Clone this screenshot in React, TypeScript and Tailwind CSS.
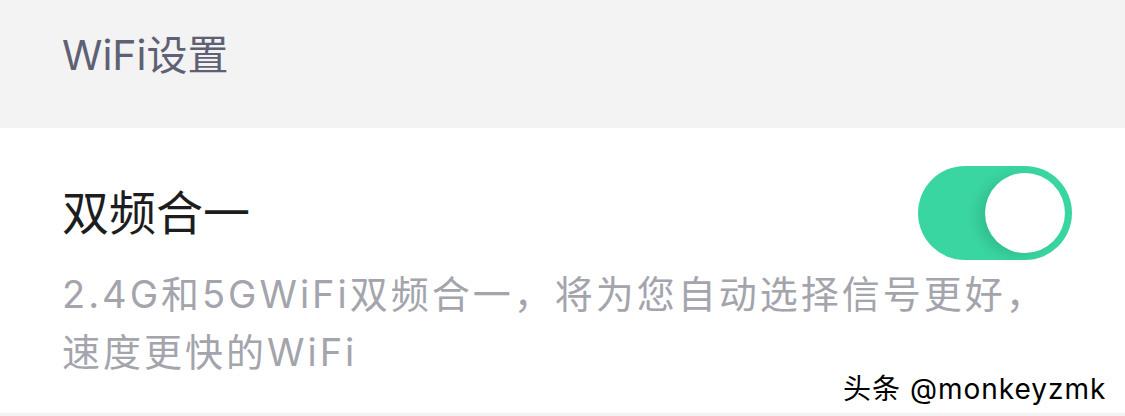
export default function App() {
  const font = { fontFamily: 'Inter, "Noto Sans CJK SC", sans-serif' };
  return (
    <div className="w-[1125px] h-[416px] bg-[#f3f3f4] relative overflow-hidden" style={font}>
      <div className="h-[128px] pl-[62px] pt-[28px]">
        <div className="text-[41px] leading-[54px] text-[#5e6173]">WiFi设置</div>
      </div>
      <div className="bg-white h-[285px] pl-[62px] pr-[53px] pt-[38px]">
        <div className="flex items-center justify-between h-[94px]">
          <div className="text-[47px] leading-[60px] text-[#1d1d20]">双频合一</div>
          <div className="w-[154px] h-[94px] rounded-full bg-[#3ad6a2] relative">
            <div className="absolute right-[7px] top-[7px] w-[80px] h-[80px] rounded-full bg-white shadow-[-8px_3px_12px_rgba(0,60,40,0.14)]" />
          </div>
        </div>
        <div className="mt-[5px] text-[38px] leading-[58px] tracking-[3px] text-[#a3a4ac]">
          2.4G和5GWiFi双频合一，将为您自动选择信号更好，
          <br />
          速度更快的WiFi
        </div>
      </div>
      <div className="absolute left-[843px] top-[371px] text-[28px] leading-[36px] tracking-[1px] text-black [text-shadow:1px_1px_0_white,-1px_-1px_0_white,0_0_2px_white]">
        头条 @monkeyzmk
      </div>
    </div>
  );
}
